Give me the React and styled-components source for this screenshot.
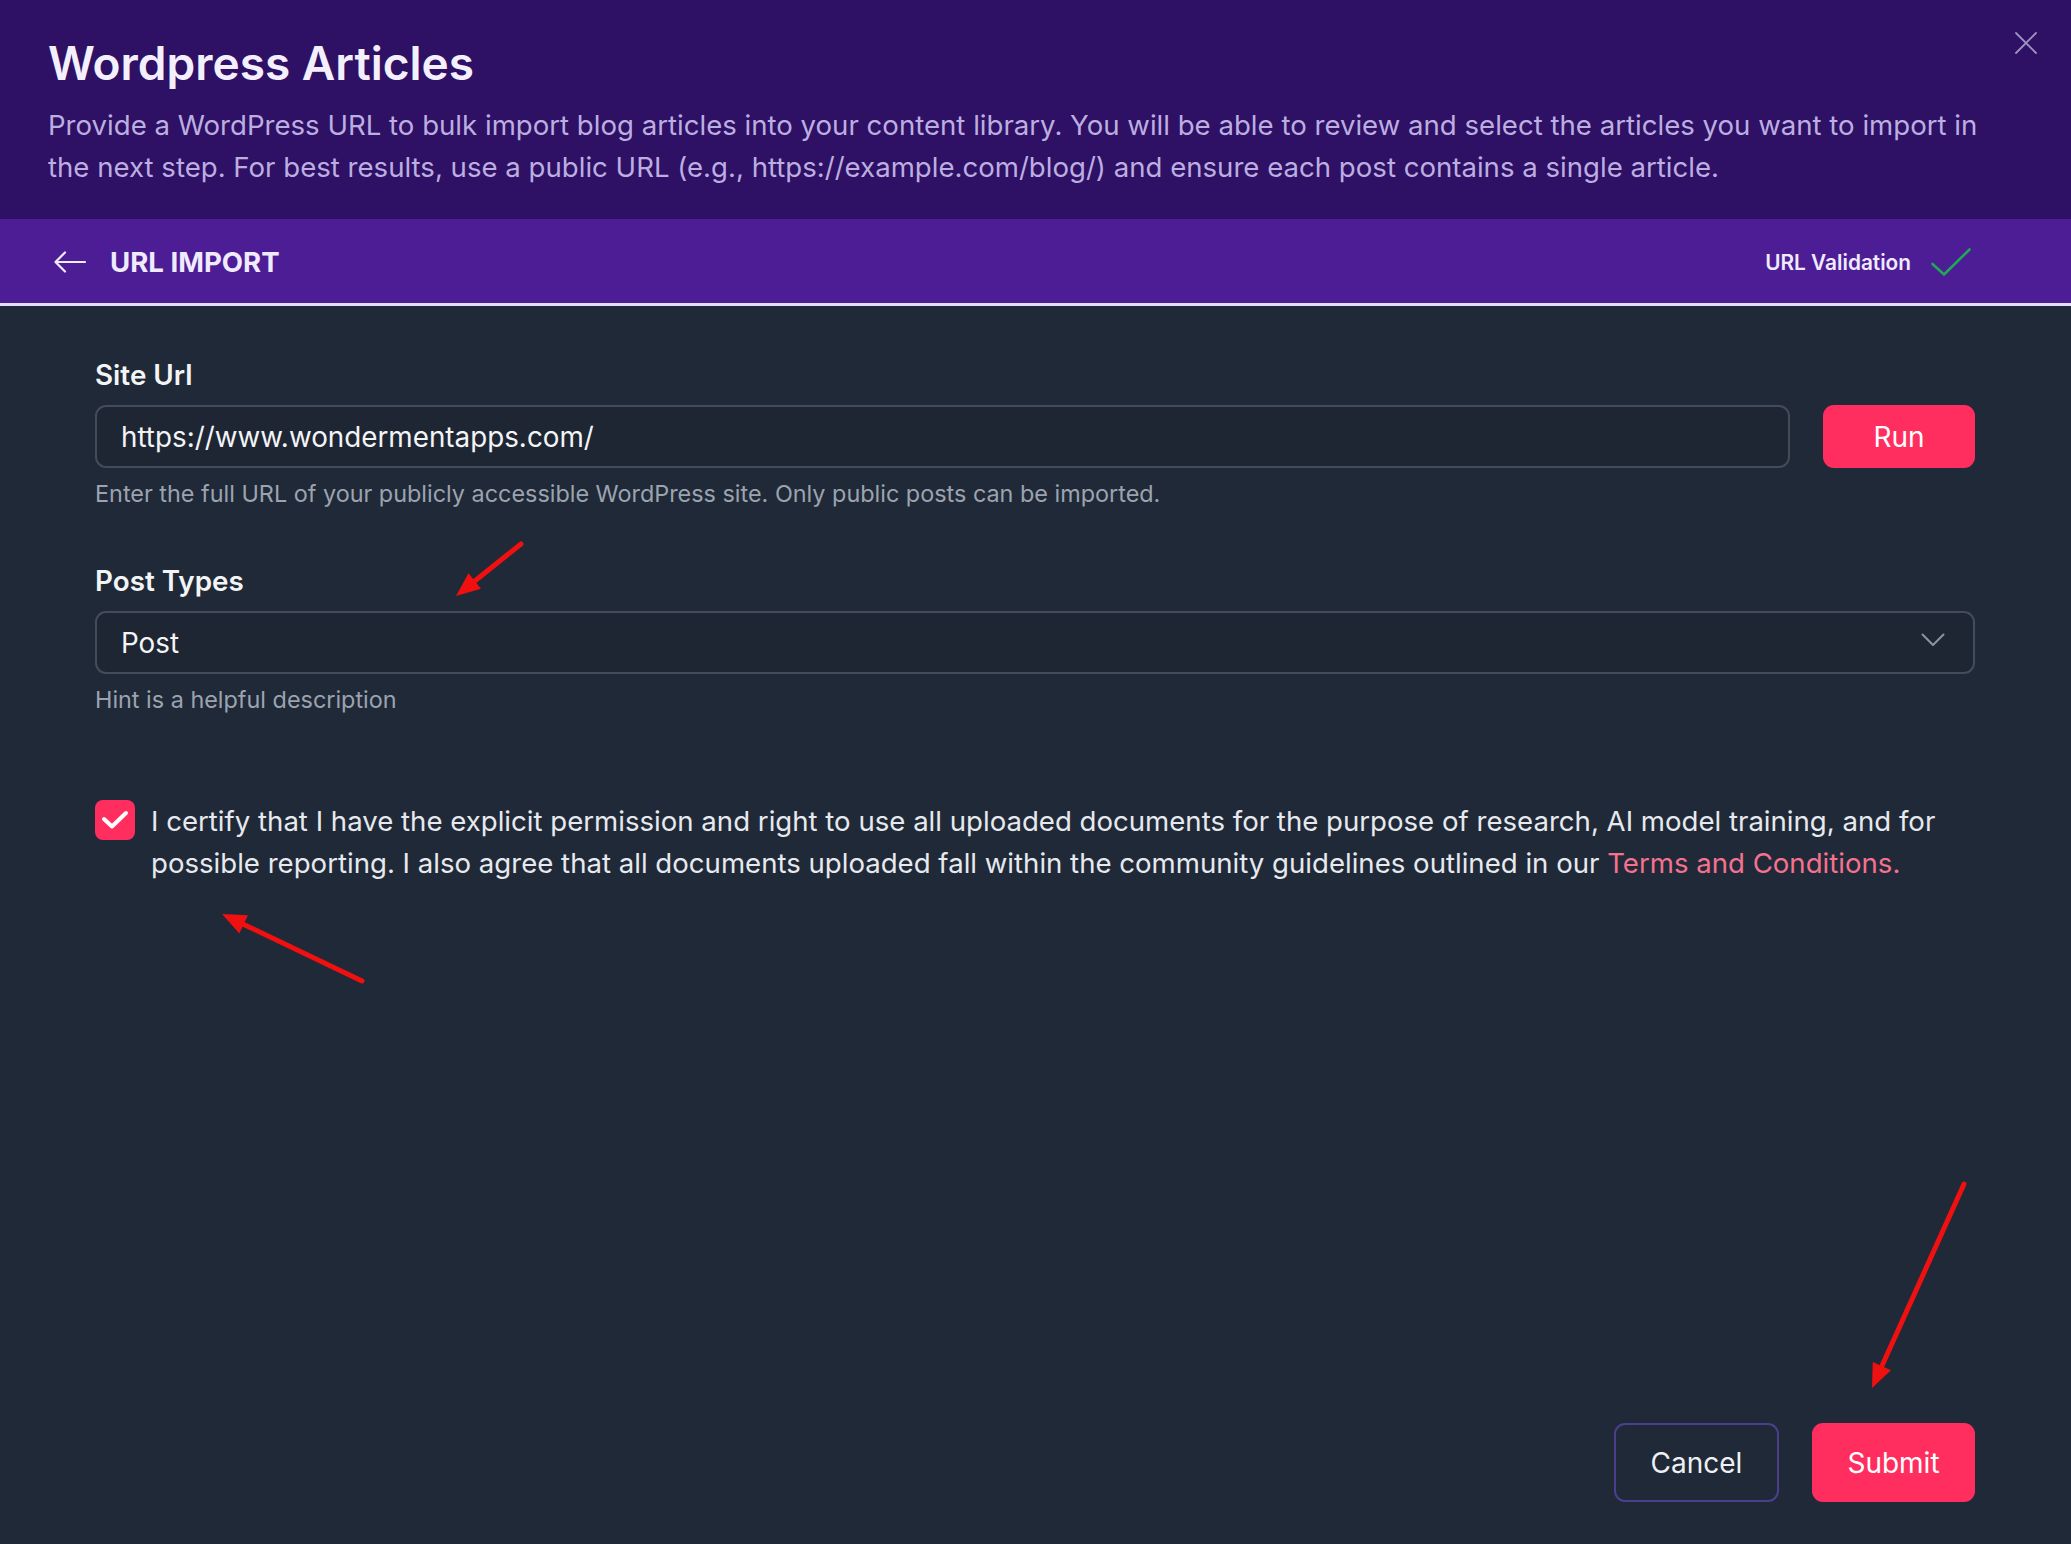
import React from "react";
import styled, { createGlobalStyle } from "styled-components";

const GlobalStyle = createGlobalStyle`
  * { box-sizing: border-box; }
  html, body { margin: 0; padding: 0; background: #1f2937; }
  body { font-family: Inter, "Noto Sans", "Liberation Sans", sans-serif; -webkit-font-smoothing: antialiased; }
`;

const Modal = styled.div`
  position: relative;
  min-height: 100vh;
  display: flex;
  flex-direction: column;
  background: #1f2937;
`;

const Header = styled.header`
  position: relative;
  background: #2e1065;
  padding: 36px 76px 31px 48px;
`;

const Title = styled.h1`
  margin: 0;
  font-size: 46px;
  line-height: 54px;
  font-weight: 600;
  color: #f3effd;
`;

const Description = styled.p`
  margin: 14px 0 0;
  font-size: 27.6px;
  line-height: 42px;
  font-weight: 400;
  color: #bcaee0;
`;

const CloseButton = styled.button`
  position: absolute;
  top: 30px;
  right: 32px;
  width: 26px;
  height: 26px;
  padding: 0;
  border: 0;
  background: transparent;
  display: flex;
  align-items: center;
  justify-content: center;
  cursor: pointer;
`;

const NavBar = styled.nav`
  display: flex;
  align-items: center;
  height: 87px;
  padding: 2px 100px 0 54px;
  background: #4c1d95;
  border-bottom: 3px solid #e4defa;
`;

const BackButton = styled.button`
  border: 0;
  padding: 0;
  background: transparent;
  display: flex;
  align-items: center;
  cursor: pointer;
`;

const NavTitle = styled.span`
  margin-left: 24px;
  font-size: 27.6px;
  font-weight: 700;
  color: #efeafd;
`;

const NavStatus = styled.div`
  margin-left: auto;
  display: flex;
  align-items: center;
  gap: 20px;
  font-size: 20.8px;
  font-weight: 600;
  color: #efeafd;
`;

const Body = styled.main`
  flex: 1;
  display: flex;
  flex-direction: column;
  padding: 48px 96px 42px 95px;
`;

const Field = styled.div`
  display: flex;
  flex-direction: column;
  margin-top: ${(p) => p.$gap || 0}px;
`;

const Label = styled.label`
  font-size: 27.8px;
  line-height: 42px;
  font-weight: 600;
  color: #f3f4f6;
  margin-bottom: 9px;
`;

const InputRow = styled.div`
  display: flex;
  gap: 33px;
`;

const TextInput = styled.input`
  flex: 1;
  min-width: 0;
  height: 63px;
  padding: 0 24px;
  border: 2px solid #434c5a;
  border-radius: 11px;
  background: #1e2633;
  color: #f3f4f6;
  font-family: inherit;
  font-size: 27.8px;
  outline: none;
`;

const PrimaryButton = styled.button`
  width: ${(p) => p.$width}px;
  height: ${(p) => p.$height}px;
  border: 0;
  border-radius: 11px;
  background: #ff2e5f;
  color: #fff;
  font-family: inherit;
  font-size: ${(p) => p.$size}px;
  font-weight: 400;
  cursor: pointer;
`;

const OutlineButton = styled.button`
  width: ${(p) => p.$width}px;
  height: ${(p) => p.$height}px;
  border: 2px solid #4b3f8c;
  border-radius: 11px;
  background: transparent;
  color: #eef0f3;
  font-family: inherit;
  font-size: ${(p) => p.$size}px;
  font-weight: 400;
  cursor: pointer;
`;

const Help = styled.div`
  margin-top: 11px;
  font-size: 23.4px;
  line-height: 30px;
  color: #9ca3af;
`;

const Select = styled.div`
  height: 63px;
  display: flex;
  align-items: center;
  justify-content: space-between;
  padding: 0 28px 0 24px;
  border: 2px solid #434c5a;
  border-radius: 11px;
  background: #1e2633;
  color: #f3f4f6;
  font-size: 27.8px;

  svg { margin-bottom: 6px; }
`;

const Consent = styled.div`
  display: flex;
  align-items: flex-start;
  gap: 16px;
  margin-top: 85px;
`;

const CheckBox = styled.span`
  flex: none;
  width: 40px;
  height: 40px;
  border-radius: 8px;
  background: #ff2e5f;
  display: flex;
  align-items: center;
  justify-content: center;
`;

const ConsentText = styled.p`
  margin: 0;
  font-size: 27.6px;
  line-height: 42px;
  color: #e7e9ee;
`;

const Link = styled.a`
  color: #f4728f;
  text-decoration: none;
`;

const Footer = styled.footer`
  margin-top: auto;
  display: flex;
  justify-content: flex-end;
  gap: 33px;
`;

const Annotations = styled.svg`
  position: absolute;
  inset: 0;
  width: 100%;
  height: 100%;
  pointer-events: none;
`;

function Arrow({ x1, y1, x2, y2 }) {
  const dx = x2 - x1;
  const dy = y2 - y1;
  const len = Math.hypot(dx, dy);
  const ux = dx / len;
  const uy = dy / len;
  const hl = 24;
  const hw = 10;
  const bx = x2 - ux * hl;
  const by = y2 - uy * hl;
  const px = -uy;
  const py = ux;
  const pts = `${x2},${y2} ${bx + px * hw},${by + py * hw} ${bx - px * hw},${by - py * hw}`;
  return (
    <g>
      <line x1={x1} y1={y1} x2={bx + ux * 4} y2={by + uy * 4} stroke="#f01010" strokeWidth="5" strokeLinecap="round" />
      <polygon points={pts} fill="#f01010" />
    </g>
  );
}

export default function App() {
  return (
    <>
      <GlobalStyle />
      <Modal>
        <Header>
          <Title>Wordpress Articles</Title>
          <Description>
            Provide a WordPress URL to bulk import blog articles into your content library. You will be able to review and
            select the articles you want to import in the next step. For best results, use a public URL (e.g.,
            https://example.com/blog/) and ensure each post contains a single article.
          </Description>
          <CloseButton aria-label="Close">
            <svg width="24" height="24" viewBox="0 0 24 24" fill="none" stroke="#9d93c0" strokeWidth="1.8" strokeLinecap="round">
              <path d="M2 2 L22 22 M22 2 L2 22" />
            </svg>
          </CloseButton>
        </Header>

        <NavBar>
          <BackButton aria-label="Back">
            <svg width="32" height="22" viewBox="0 0 32 22" fill="none" stroke="#efeafd" strokeWidth="2.2" strokeLinecap="round" strokeLinejoin="round">
              <path d="M31 11 H2 M11 1.5 L1.5 11 L11 20.5" />
            </svg>
          </BackButton>
          <NavTitle>URL IMPORT</NavTitle>
          <NavStatus>
            URL Validation
            <svg width="40" height="28" viewBox="0 0 40 28" fill="none" stroke="#1fa855" strokeWidth="2.6" strokeLinecap="round" strokeLinejoin="round">
              <path d="M1.5 16 L13 26.5 L38.5 1.5" />
            </svg>
          </NavStatus>
        </NavBar>

        <Body>
          <Field>
            <Label>Site Url</Label>
            <InputRow>
              <TextInput defaultValue="https://www.wondermentapps.com/" />
              <PrimaryButton $width={152} $height={63} $size={28}>Run</PrimaryButton>
            </InputRow>
            <Help>Enter the full URL of your publicly accessible WordPress site. Only public posts can be imported.</Help>
          </Field>

          <Field $gap={51}>
            <Label>Post Types</Label>
            <Select>
              <span>Post</span>
              <svg width="24" height="14" viewBox="0 0 24 14" fill="none" stroke="#8b93a1" strokeWidth="2" strokeLinecap="round" strokeLinejoin="round">
                <path d="M1.5 1.5 L12 12 L22.5 1.5" />
              </svg>
            </Select>
            <Help>Hint is a helpful description</Help>
          </Field>

          <Consent>
            <CheckBox>
              <svg width="40" height="40" viewBox="0 0 40 40" fill="none" stroke="#ffffff" strokeWidth="4" strokeLinecap="round" strokeLinejoin="round">
                <path d="M9 19 L17 26.5 L31 13" />
              </svg>
            </CheckBox>
            <ConsentText>
              I certify that I have the explicit permission and right to use all uploaded documents for the purpose of
              research, AI model training, and for possible reporting. I also agree that all documents uploaded fall within
              the community guidelines outlined in our <Link href="#">Terms and Conditions.</Link>
            </ConsentText>
          </Consent>

          <Footer>
            <OutlineButton $width={165} $height={79} $size={28}>Cancel</OutlineButton>
            <PrimaryButton $width={163} $height={79} $size={28}>Submit</PrimaryButton>
          </Footer>
        </Body>

        <Annotations viewBox="0 0 2071 1544" preserveAspectRatio="none">
          <Arrow x1={521} y1={544} x2={456} y2={596} />
          <Arrow x1={362} y1={981} x2={222} y2={914} />
          <Arrow x1={1964} y1={1184} x2={1872} y2={1388} />
        </Annotations>
      </Modal>
    </>
  );
}
